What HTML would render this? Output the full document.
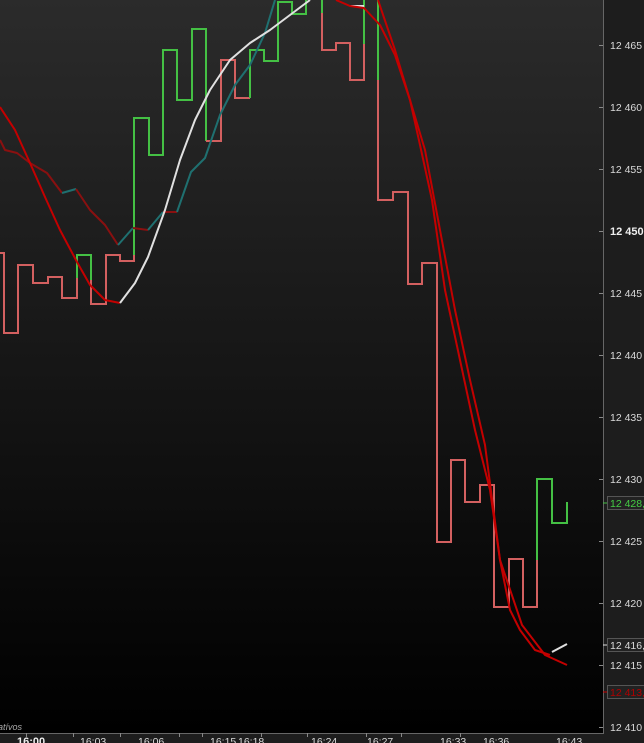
<!DOCTYPE html>
<html><head><meta charset="utf-8"><style>
html,body{margin:0;padding:0;width:644px;height:743px;overflow:hidden;background:#1d1d1d}
svg{display:block}
text{font-family:"Liberation Sans",sans-serif;font-size:10.5px;fill:#dadada}
</style></head><body>
<svg width="644" height="743" viewBox="0 0 644 743">
<defs><linearGradient id="g" x1="0" y1="0" x2="0" y2="1">
<stop offset="0" stop-color="#2b2b2b"/><stop offset="0.5" stop-color="#161616"/><stop offset="1" stop-color="#000"/></linearGradient></defs>
<rect x="0" y="0" width="644" height="743" fill="#1d1d1d"/>
<rect x="0" y="0" width="603" height="733" fill="url(#g)"/>
<line x1="603.5" y1="0" x2="603.5" y2="734" stroke="#666" stroke-width="1"/>
<line x1="0" y1="733.5" x2="604" y2="733.5" stroke="#666" stroke-width="1"/>
<g fill="none" stroke-width="2" stroke-linejoin="miter">
<polyline stroke="#d36060" points="0,253 4,253 4,333 18,333 18,265 33,265 33,283 48,283 48,277 62,277 62,298 77,298 77,278"/>
<polyline stroke="#44c044" points="77,278 77,255 91,255 91,280"/>
<polyline stroke="#d36060" points="91,280 91,304 106,304 106,255 120,255 120,261 134,261 134,255"/>
<polyline stroke="#44c044" points="134,255 134,118 149,118 149,155 163,155 163,50 177,50 177,100 192,100 192,29 206,29 206,141"/>
<polyline stroke="#d36060" points="206,141 221,141 221,60 235,60 235,98 250,98"/>
<polyline stroke="#44c044" points="250,98 250,50 264,50 264,61 278,61 278,2 292,2 292,14 306,14 306,-2"/>
<polyline stroke="#44c044" points="322,-2 322,13"/>
<polyline stroke="#d36060" points="322,13 322,50 336,50 336,43 350,43 350,80 364,80 364,44"/>
<polyline stroke="#44c044" points="364,44 364,-2"/>
<polyline stroke="#44c044" points="378,-2 378,80"/>
<polyline stroke="#d36060" points="378,80 378,200 393,200 393,192 408,192 408,284 422,284 422,263 437,263 437,542 451,542 451,460 465,460 465,502 480,502 480,485 494,485 494,607 509,607 509,559 523,559 523,607 537,607 537,560"/>
<polyline stroke="#44c044" points="537,560 537,479 552,479 552,523 567,523 567,502"/>
</g>
<g fill="none" stroke-width="2" stroke-linejoin="round">
<polyline stroke="#8a1010" points="0,140 5,150 17,153 30,163 47,173 62,193"/>
<polyline stroke="#1f7070" points="62,193 76,189"/>
<polyline stroke="#8a1010" points="76,189 90,210 105,225 118,245"/>
<polyline stroke="#1f7070" points="118,245 133,228"/>
<polyline stroke="#8a1010" points="133,228 148,230"/>
<polyline stroke="#1f7070" points="148,230 163,212"/>
<polyline stroke="#8a1010" points="163,212 177,212"/>
<polyline stroke="#1f7070" points="177,212 191,172 205,158 220,115 235,85 250,65 265,33 275,0"/>
<polyline stroke="#c40000" points="0,107 15,130 30,163 45,197 60,230 77,262 90,285 105,300 120,303"/>
<polyline stroke="#e0e0e0" points="120,303 135,283 148,257 165,210 180,160 195,120 210,90 230,60 250,43 270,30 290,15 310,0"/>
<polyline stroke="#e0e0e0" points="350,6 364,6"/>
<polyline stroke="#c40000" points="336,0 350,6 364,8 380,25 395,55 410,100 425,150 440,230 455,310 470,380 485,445 500,560 510,610 520,630 535,650 550,655"/>
<polyline stroke="#c40000" points="378,0 395,50 410,100 420,145 432,200 445,290 460,360 475,430 490,490 500,560 522,625 545,655 567,665"/>
<polyline stroke="#e0e0e0" points="552,652 567,644"/>
</g>
<g stroke="#888" stroke-width="1">
<line x1="599" y1="45.5" x2="603" y2="45.5"/><line x1="599" y1="107.5" x2="603" y2="107.5"/><line x1="599" y1="169.5" x2="603" y2="169.5"/><line x1="599" y1="231.5" x2="603" y2="231.5"/><line x1="599" y1="293.5" x2="603" y2="293.5"/><line x1="599" y1="355.5" x2="603" y2="355.5"/><line x1="599" y1="417.5" x2="603" y2="417.5"/><line x1="599" y1="479.5" x2="603" y2="479.5"/><line x1="599" y1="541.5" x2="603" y2="541.5"/><line x1="599" y1="603.5" x2="603" y2="603.5"/><line x1="599" y1="665.5" x2="603" y2="665.5"/><line x1="599" y1="727.5" x2="603" y2="727.5"/>
</g>
<g>
<text x="610" y="49">12 465</text><text x="610" y="111">12 460</text><text x="610" y="173">12 455</text>
<text x="610" y="235" style="font-weight:bold;font-size:11px;fill:#eee">12 450</text>
<text x="610" y="297">12 445</text><text x="610" y="359">12 440</text><text x="610" y="421">12 435</text>
<text x="610" y="483">12 430</text><text x="610" y="545">12 425</text><text x="610" y="607">12 420</text>
<text x="610" y="669">12 415</text><text x="610" y="731">12 410</text>
</g>
<rect x="607.5" y="496.5" width="40" height="13" fill="#222" stroke="#555"/>
<line x1="603" y1="503" x2="607" y2="503" stroke="#44c044"/>
<text x="610" y="507" style="fill:#44cc44">12 428,3</text>
<rect x="607.5" y="638.5" width="40" height="13" fill="#222" stroke="#555"/>
<line x1="603" y1="645" x2="607" y2="645" stroke="#ddd"/>
<text x="610" y="649">12 416,9</text>
<rect x="607.5" y="685.5" width="40" height="13" fill="#222" stroke="#555"/>
<line x1="603" y1="692" x2="607" y2="692" stroke="#c00"/>
<text x="610" y="696" style="fill:#b00000">12 413,0</text>
<text x="-2" y="730" style="font-style:italic;fill:#aaa;font-size:9px">atívos</text>
<g stroke="#888"><line x1="26.5" y1="733" x2="26.5" y2="737"/><line x1="73.5" y1="733" x2="73.5" y2="737"/><line x1="120.5" y1="733" x2="120.5" y2="737"/><line x1="179.5" y1="733" x2="179.5" y2="737"/><line x1="202.5" y1="733" x2="202.5" y2="737"/><line x1="261.5" y1="733" x2="261.5" y2="737"/><line x1="307.5" y1="733" x2="307.5" y2="737"/><line x1="366.5" y1="733" x2="366.5" y2="737"/><line x1="401.5" y1="733" x2="401.5" y2="737"/><line x1="460.5" y1="733" x2="460.5" y2="737"/></g>
<g style="font-size:9px">
<text x="17" y="745" style="font-weight:bold;font-size:11px;fill:#eee">16:00</text>
<text x="80" y="745">16:03</text><text x="138" y="745">16:06</text><text x="210" y="745">16:15</text><text x="238" y="745">16:18</text>
<text x="311" y="745">16:24</text><text x="367" y="745">16:27</text><text x="440" y="745">16:33</text><text x="483" y="745">16:36</text><text x="556" y="745">16:43</text>
</g>
</svg>
</body></html>
